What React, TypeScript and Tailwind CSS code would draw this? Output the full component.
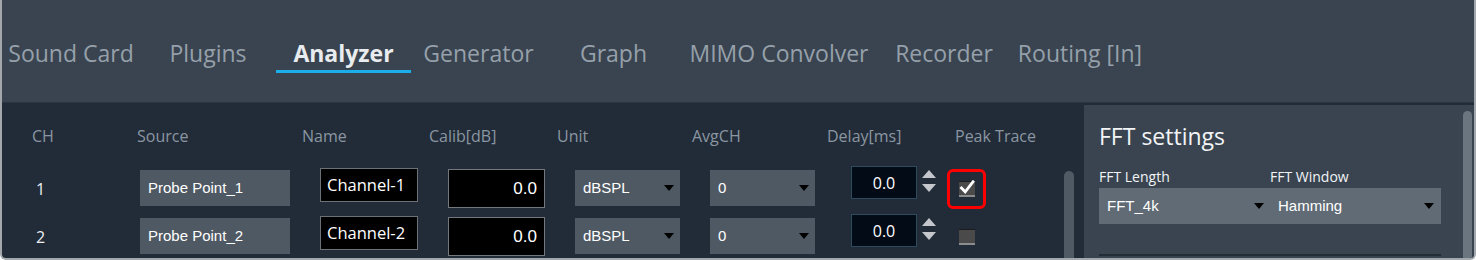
import React from "react";

const tabs: { label: string; w: number; active?: boolean }[] = [
  { label: "Sound Card", w: 138 },
  { label: "Plugins", w: 136 },
  { label: "Analyzer", w: 135, active: true },
  { label: "Generator", w: 135 },
  { label: "Graph", w: 135 },
  { label: "MIMO Convolver", w: 196 },
  { label: "Recorder", w: 134 },
  { label: "Routing [In]", w: 138 },
];

const headers: { label: string; w: number }[] = [
  { label: "CH", w: 105 },
  { label: "Source", w: 165 },
  { label: "Name", w: 127 },
  { label: "Calib[dB]", w: 128 },
  { label: "Unit", w: 135 },
  { label: "AvgCH", w: 135 },
  { label: "Delay[ms]", w: 128 },
  { label: "Peak Trace", w: 120 },
];

function Tri({ className }: { className?: string }) {
  return (
    <svg width="10" height="6" viewBox="0 0 10 6" className={className}>
      <polygon points="0,0 10,0 5,6" fill="#000000" />
    </svg>
  );
}

function Spinner() {
  return (
    <div className="flex flex-col gap-[6px] mt-[6px] w-[14px]">
      <svg width="14" height="8" viewBox="0 0 14 8">
        <polygon points="7,0 14,8 0,8" fill="#c4c8cc" />
      </svg>
      <svg width="14" height="8" viewBox="0 0 14 8">
        <polygon points="0,0 14,0 7,8" fill="#c4c8cc" />
      </svg>
    </div>
  );
}

function Row({ n, checked }: { n: number; checked: boolean }) {
  return (
    <div className="flex items-start h-[48px]">
      <div className="w-[138px] pl-[34px] mt-[15px] text-[16px] leading-[20px] text-[#eceff1]">{n}</div>
      <div className="w-[150px] h-[36px] mt-[6px] bg-[#4f5963] flex items-center pl-[8px] text-[15px] text-white font-['Liberation_Sans',sans-serif]">
        Probe Point_{n}
      </div>
      <div className="ml-[30px] w-[98px] h-[34px] mt-[4px] bg-black border border-[#6c7176] flex items-center pl-[6px] text-[16.5px] text-white">
        Channel-{n}
      </div>
      <div className="ml-[30px] w-[97px] h-[39px] mt-[5px] bg-black border-[1.5px] border-[#73787d] flex items-center justify-end pr-[7px] text-[17px] text-white font-['Liberation_Sans',sans-serif]">
        0.0
      </div>
      <div className="ml-[30px] w-[105px] h-[36px] mt-[6px] bg-[#4f5963] flex items-center justify-between pl-[8px] pr-[6px] text-[15px] text-white font-['Liberation_Sans',sans-serif]">
        <span>dBSPL</span>
        <Tri />
      </div>
      <div className="ml-[30px] w-[105px] h-[36px] mt-[6px] bg-[#4f5963] flex items-center justify-between pl-[8px] pr-[6px] text-[15px] text-white font-['Liberation_Sans',sans-serif]">
        <span>0</span>
        <Tri />
      </div>
      <div className="ml-[36px] w-[66px] h-[33px] mt-[2px] bg-[#030b16] border border-[#2d4a5f] flex items-center justify-center text-[16px] text-white">
        0.0
      </div>
      <div className="ml-[5px]">
        <Spinner />
      </div>
      <div
        className={
          "ml-[11px] mt-[5px] w-[39px] h-[40px] rounded-[6px] border-[3px] flex items-center justify-center " +
          (checked ? "border-[#ff0000]" : "border-transparent")
        }
      >
        <div className="w-[16px] h-[16px] bg-[#4a4a4a] border-t border-t-[#1c1c1c] border-b-2 border-b-[#8c8c8c] flex items-center justify-center">
          {checked && (
            <svg width="16" height="15" viewBox="0 0 16 15" className="-mt-[3px]">
              <path d="M2.5 8 L6.2 11.8 L14 1.8" stroke="#ffffff" strokeWidth="2.8" fill="none" strokeLinecap="square" />
            </svg>
          )}
        </div>
      </div>
    </div>
  );
}

export default function App() {
  return (
    <div className="w-[1476px] h-[260px] overflow-hidden bg-[#222c38] border-l-2 border-r-2 border-b-2 border-[#a3a8ac] rounded-b-[6px] font-['Open_Sans',sans-serif]">
      {/* Header tabs */}
      <div className="h-[103px] bg-[#394450] border-b border-[#2b3541] flex items-start">
        {tabs.map((t) => (
          <div key={t.label} style={{ width: t.w }} className="flex flex-col items-stretch pt-[38px] shrink-0">
            <div
              className={
                "text-center text-[23px] leading-[30px] whitespace-nowrap " +
                (t.active ? "font-bold text-[#e9ecef]" : "text-[#96a0aa]")
              }
            >
              {t.label}
            </div>
            <div className={"mt-[2px] h-[3px] " + (t.active ? "bg-[#1aaeea]" : "bg-transparent")} />
          </div>
        ))}
      </div>

      {/* Content */}
      <div className="flex h-[155px]">
        {/* Left table */}
        <div className="w-[1082px] flex">
          <div className="w-[1062px] flex flex-col">
            <div className="flex pt-[23px] pl-[30px] h-[43px] text-[16px] leading-[20px] text-[#8a96a2] whitespace-nowrap">
              {headers.map((h) => (
                <div key={h.label} style={{ width: h.w }} className="shrink-0">
                  {h.label}
                </div>
              ))}
            </div>
            <div className="mt-[18px]">
              <Row n={1} checked={true} />
              <Row n={2} checked={false} />
            </div>
          </div>
          <div className="w-[10px] pt-[68px]">
            <div className="w-[10px] h-full bg-[#4f5a65] rounded-t-[5px]" />
          </div>
        </div>

        {/* Right panel */}
        <div className="w-[390px] mt-[2px] bg-[#394450] flex">
          <div className="w-[379px] pl-[15px] flex flex-col">
            <div className="pt-[16px] text-[23px] leading-[30px] text-[#f2f4f6]">FFT settings</div>
            <div className="grid grid-cols-[171px_171px] mt-[17px]">
              <div className="text-[14px] leading-[18px] text-[#f2f4f6]">FFT Length</div>
              <div className="text-[14px] leading-[18px] text-[#f2f4f6]">FFT Window</div>
            </div>
            <div className="grid grid-cols-[171px_171px] w-[342px] mt-[2px] h-[36px] bg-[#606b75] font-['Liberation_Sans',sans-serif] text-[15px] text-white">
              <div className="flex items-center justify-between pl-[8px] pr-[6px]">
                <span>FFT_4k</span>
                <Tri />
              </div>
              <div className="flex items-center justify-between pl-[8px] pr-[7px]">
                <span>Hamming</span>
                <Tri />
              </div>
            </div>
            <div className="mt-[30px] w-[342px] h-[2px] bg-[#222c37]" />
          </div>
          <div className="w-[9px] pt-[6px]">
            <div className="w-[9px] h-full bg-[#6b7580] rounded-t-[5px]" />
          </div>
        </div>
      </div>
    </div>
  );
}
